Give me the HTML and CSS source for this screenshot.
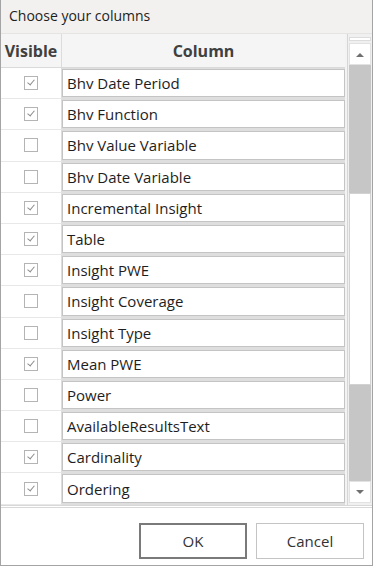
FILE: index.html
```html
<!DOCTYPE html>
<html lang="en">
<head>
    <meta charset="UTF-8">
    <title>Choose your columns</title>
    <link rel="stylesheet" href="styles.css">
</head>
<body>

<div class="dialog">
    <div class="titlebar">Choose your columns</div>

    <div class="main">
        <div class="grid">
            <div class="head">
                <div class="h-vis">Visible</div>
                <div class="h-col">Column</div>
            </div>
            <div class="rows">
                <div class="row"><div class="vis"><span class="chk on"></span></div><div class="col"><div class="box">Bhv Date Period</div></div></div>
                <div class="row"><div class="vis"><span class="chk on"></span></div><div class="col"><div class="box">Bhv Function</div></div></div>
                <div class="row"><div class="vis"><span class="chk"></span></div><div class="col"><div class="box">Bhv Value Variable</div></div></div>
                <div class="row"><div class="vis"><span class="chk"></span></div><div class="col"><div class="box">Bhv Date Variable</div></div></div>
                <div class="row"><div class="vis"><span class="chk on"></span></div><div class="col"><div class="box">Incremental Insight</div></div></div>
                <div class="row"><div class="vis"><span class="chk on"></span></div><div class="col"><div class="box">Table</div></div></div>
                <div class="row"><div class="vis"><span class="chk on"></span></div><div class="col"><div class="box">Insight PWE</div></div></div>
                <div class="row"><div class="vis"><span class="chk"></span></div><div class="col"><div class="box">Insight Coverage</div></div></div>
                <div class="row"><div class="vis"><span class="chk"></span></div><div class="col"><div class="box">Insight Type</div></div></div>
                <div class="row"><div class="vis"><span class="chk on"></span></div><div class="col"><div class="box">Mean PWE</div></div></div>
                <div class="row"><div class="vis"><span class="chk"></span></div><div class="col"><div class="box">Power</div></div></div>
                <div class="row"><div class="vis"><span class="chk"></span></div><div class="col"><div class="box">AvailableResultsText</div></div></div>
                <div class="row"><div class="vis"><span class="chk on"></span></div><div class="col"><div class="box">Cardinality</div></div></div>
                <div class="row"><div class="vis"><span class="chk on"></span></div><div class="col"><div class="box">Ordering</div></div></div>
            </div>
        </div>

        <div class="scroll">
            <div class="scroll-cap"></div>
            <div class="scroll-btn">
                <svg width="8" height="5" viewBox="0 0 8 5"><polygon points="0,5 8,5 4,1" fill="#707070"/></svg>
            </div>
            <div class="track">
                <div class="thumb"></div>
            </div>
            <div class="scroll-btn">
                <svg width="8" height="5" viewBox="0 0 8 5"><polygon points="0,0 8,0 4,4" fill="#707070"/></svg>
            </div>
        </div>
    </div>

    <div class="footer">
        <button class="btn default">OK</button>
        <button class="btn">Cancel</button>
    </div>
</div>

</body>
</html>
```

FILE: styles.css
```css
body {
    margin: 0;
    font-family: 'Open Sans', 'Noto Sans', Arial, sans-serif;
    color: #1e1e1e;
    background: #fff;
}
.dialog {
    width: 373px;
    height: 566px;
    box-sizing: border-box;
    border: 1px solid #a4a4a4;
    border-top: none;
    display: flex;
    flex-direction: column;
    background: #fff;
}
.titlebar {
    height: 33px;
    line-height: 32px;
    padding-left: 8px;
    font-size: 14px;
    background: #f3f1ef;
    border-bottom: 1px solid #e6e4e2;
}
.main {
    display: flex;
    height: 471px;
    background: #f3f3f3;
}
.grid {
    flex: 1;
    display: flex;
    flex-direction: column;
}
.head {
    display: flex;
    height: 33px;
    background: #f5f5f5;
    border-bottom: 1px solid #dadada;
    font-weight: bold;
    font-size: 16px;
    color: #404040;
}
.h-vis {
    width: 60px;
    display: flex;
    align-items: center;
    justify-content: center;
    border-right: 1px solid #dcdcdc;
}
.h-col {
    flex: 1;
    display: flex;
    align-items: center;
    justify-content: center;
}
.rows {
    flex: 1;
    overflow: hidden;
    background: #fff;
}
.row {
    display: flex;
    height: 31.2px;
}
.vis {
    width: 60px;
    display: flex;
    align-items: center;
    justify-content: center;
    border-right: 1px solid #dcdcdc;
    border-bottom: 1px solid #e8e8e8;
    background: #fff;
}
.chk {
    width: 12px;
    height: 12px;
    border: 1px solid #b4b4b4;
    background: #fff;
    position: relative;
}
.chk.on::after {
    content: "";
    position: absolute;
    left: 3.5px;
    top: 1px;
    width: 3px;
    height: 6px;
    border: solid #8c8c8c;
    border-width: 0 1.5px 1.5px 0;
    transform: rotate(40deg);
}
.col {
    flex: 1;
    padding: 1px 0 2px 0;
    background: #dedede;
}
.box {
    height: 100%;
    box-sizing: border-box;
    border: 1px solid #c4c4c4;
    background: #fff;
    padding-left: 4px;
    display: flex;
    align-items: center;
    font-size: 15px;
    color: #1e1e1e;
}
.scroll {
    width: 22px;
    margin-left: 2px;
    display: flex;
    flex-direction: column;
    padding: 3px 1px 2px 1px;
    background: #f0f0f0;
    border-left: 1px solid #d6d6d6;
}
.scroll-cap {
    height: 2px;
    background: #fff;
    border: 1px solid #dcdcdc;
    margin-bottom: 2px;
}
.scroll-btn {
    height: 22px;
    background: #fff;
    border: 1px solid #e2e2e2;
    box-sizing: border-box;
    display: flex;
    align-items: center;
    justify-content: center;
}
.track {
    flex: 1;
    background: #c6c6c6;
    padding-top: 128px;
}
.thumb {
    height: 192px;
    background: #fff;
    border: 1px solid #d2d2d2;
    box-sizing: border-box;
}
.footer {
    flex: 1;
    border-top: 3px double #d8d8d8;
    display: flex;
    justify-content: flex-end;
    gap: 9px;
    padding: 15px 8px 0 0;
    background: #fff;
}
.btn {
    width: 108px;
    height: 36px;
    font-family: inherit;
    font-size: 15px;
    color: #333;
    background: #fff;
    border: 1px solid #c4c4c4;
}
.btn.default {
    border: 2px solid #7a7a7a;
}
```
